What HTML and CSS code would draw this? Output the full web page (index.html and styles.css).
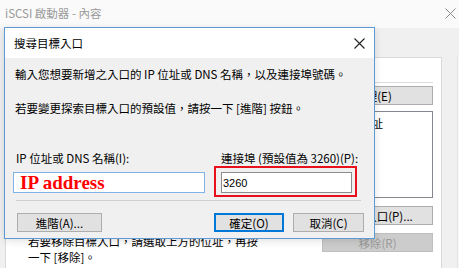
FILE: index.html
```html
<!DOCTYPE html>
<html lang="zh-Hant">
<head>
	<meta charset="UTF-8">
	<title>iSCSI 啟動器 - 內容</title>
	<link rel="stylesheet" href="styles.css">
</head>
<body>
	<div class="win">
		<div class="win_title">
			<span class="win_caption">iSCSI 啟動器 - 內容</span>
			<svg class="win_close" width="11" height="11" viewBox="0 0 11 11"><path d="M0.5 0.5L10.5 10.5M10.5 0.5L0.5 10.5" stroke="#8a8a8a" stroke-width="1" fill="none"/></svg>
		</div>
		<div class="win_body">
			<div class="tab_page">
				<div class="group_line"></div>
				<div class="row_right"><span class="btn btn_mgr">管理(E)</span></div>
				<div class="list_box"><div class="list_head">位址</div></div>
				<div class="row_right"><span class="btn btn_wide">探索入口(P)...</span></div>
				<div class="row_bottom">
					<p class="hint">若要移除目標入口，請選取上方的位址，再按<br>一下 [移除]。</p>
					<span class="btn btn_wide btn_off">移除(R)</span>
				</div>
			</div>
			<div class="side_strip"></div>
		</div>

		<div class="dlg">
			<div class="dlg_title">
				<span>搜尋目標入口</span>
				<svg class="dlg_close" width="11" height="11" viewBox="0 0 11 11"><path d="M0.5 0.5L10.5 10.5M10.5 0.5L0.5 10.5" stroke="#222" stroke-width="1.1" fill="none"/></svg>
			</div>
			<div class="dlg_body">
				<p class="line line1">輸入您想要新增之入口的 IP 位址或 DNS 名稱，以及連接埠號碼。</p>
				<p class="line line2">若要變更探索目標入口的預設值，請按一下 [進階] 按鈕。</p>
				<div class="form_row">
					<div class="col col_ip">
						<label class="lbl lbl_ip">IP 位址或 DNS 名稱(I):</label>
						<div class="field field_ip">IP address</div>
					</div>
					<div class="col col_port">
						<label class="lbl">連接埠 (預設值為 3260)(P):</label>
						<div class="port_wrap">
							<div class="field field_port">3260</div>
							<div class="mark"></div>
						</div>
					</div>
				</div>
				<div class="sep"></div>
				<div class="btn_row">
					<span class="btn btn_adv">進階(A)...</span>
					<span class="spacer"></span>
					<span class="btn btn_ok">確定(O)</span>
					<span class="btn btn_cancel">取消(C)</span>
				</div>
			</div>
		</div>
	</div>
</body>
</html>
```

FILE: styles.css
```css
*{box-sizing:border-box;}
html,body{margin:0;padding:0;}
body{font-family:"Noto Sans CJK TC","Liberation Sans",sans-serif;font-size:11.5px;color:#000;background:#f0f0f0;}
p{margin:0;}

.win{position:relative;width:459px;height:268px;overflow:hidden;background:#f0f0f0;}
.win_title{display:flex;align-items:center;justify-content:space-between;height:28px;padding:0 2px 2px 5px;background:#fafafa;color:#999;}
.win_caption{line-height:16px;}
.win_close{margin-right:1px;}
.win_body{display:flex;height:240px;padding-top:29px;}

.tab_page{display:flex;flex-direction:column;width:437px;margin-left:5px;padding:0 8px 0 0;background:#fff;border:1px solid #d9d9d9;border-bottom:none;}
.side_strip{flex:1;margin-left:15px;border-left:1px solid #e3e3e3;background:#f7f7f7;}
.group_line{height:1px;margin:24px 0 0 10px;background:#dcdcdc;}
.row_right{display:flex;justify-content:flex-end;}
.btn{display:flex;align-items:center;justify-content:center;height:19px;background:#e1e1e1;border:1px solid #adadad;line-height:16px;white-space:nowrap;}
.btn_mgr{width:120px;margin-top:3px;}
.list_box{height:87px;margin:6px 0 0 10px;border:1px solid #828790;background:#fff;}
.list_head{padding:3px 0 0 343px;line-height:16px;}
.btn_wide{width:111px;margin-top:8px;}
.row_bottom{display:flex;justify-content:space-between;align-items:flex-start;}
.hint{margin:8px 0 0 22px;line-height:16px;}
.btn_off{margin-top:8px;background:#cccccc;border-color:#bfbfbf;color:#9a9a9a;}

.dlg{position:absolute;left:4px;top:27px;width:371px;height:212px;background:#f0f0f0;border:1px solid #5c9ad6;box-shadow:0 2px 8px rgba(0,0,0,0.12);}
.dlg_title{display:flex;align-items:center;justify-content:space-between;height:30px;padding:0 9px 0 9px;background:#fff;line-height:16px;}
.dlg_close{margin-top:1px;}
.dlg_body{display:flex;flex-direction:column;}
.line{line-height:16px;margin-left:10px;white-space:nowrap;}
.line1{margin-top:8px;}
.line2{margin-top:18px;}
.form_row{display:flex;gap:16px;margin-top:34px;padding-left:8px;}
.col{display:flex;flex-direction:column;}
.col_ip{width:192px;}
.col_port{width:131px;}
.lbl{line-height:16px;white-space:nowrap;}
.lbl_ip{padding-left:3px;}
.field{height:21px;margin-top:6px;background:#fff;}
.field_ip{display:flex;align-items:center;padding-left:6px;border:1px solid #7eb4ea;color:#f00;font-family:"Liberation Serif",serif;font-weight:bold;font-size:19px;}
.port_wrap{position:relative;}
.field_port{display:flex;align-items:center;padding-left:1px;border:1px solid #8c8c8c;font-family:"Liberation Sans",sans-serif;font-size:11px;}
.mark{position:absolute;left:-7px;top:0;width:143px;height:31px;border:2px solid #e8111b;}
.sep{height:1px;margin:7px 13px 0 11px;background:#d0d0d0;}
.btn_row{display:flex;gap:9px;margin:12px 10px 0 12px;}
.spacer{flex:1;}
.btn_adv{width:85px;}
.btn_ok{width:70px;border:2px solid #0078d7;}
.btn_cancel{width:71px;}
```
